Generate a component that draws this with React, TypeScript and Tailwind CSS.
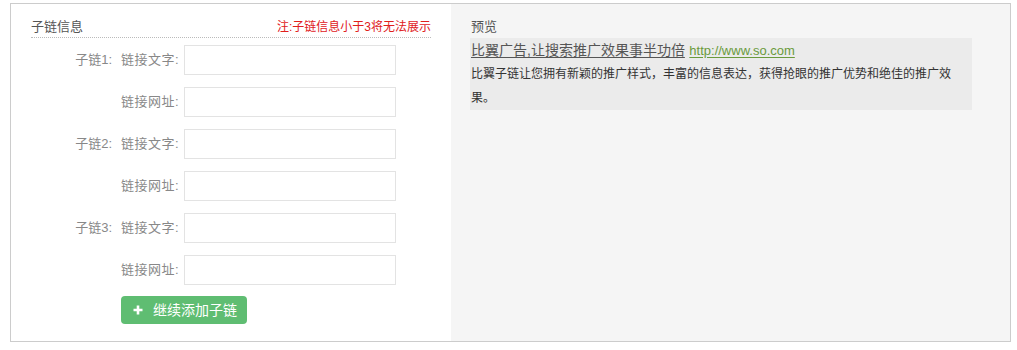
import React from 'react';

const font = "font-['Liberation_Sans','Noto_Sans_CJK_SC',sans-serif]";

const rows = [
  { label: '子链1:', kind: 'text' },
  { label: '', kind: 'url' },
  { label: '子链2:', kind: 'text' },
  { label: '', kind: 'url' },
  { label: '子链3:', kind: 'text' },
  { label: '', kind: 'url' },
];

export default function App() {
  return (
    <div className={`pl-[10px] pt-[3px] ${font}`}>
      <div className="w-[1001px] h-[339px] border border-[#cccccc] flex">
        {/* left: sub-link form */}
        <div className="w-[440px] bg-white pl-[20px] pt-[13px]">
          <div className="w-[400px] h-[21px] border-b border-dotted border-[#bbbbbb] flex items-start justify-between">
            <span className="text-[13px] leading-[20px] text-[#555555]">子链信息</span>
            <span className="text-[12px] leading-[20px] text-[#e0201c]">注:子链信息小于3将无法展示</span>
          </div>

          <div className="mt-[7px] flex flex-col gap-[12px]">
            {rows.map((r, i) => (
              <div key={i} className="flex items-center h-[30px]">
                <span className="w-[81px] text-right text-[13px] text-[#888888]">{r.label}</span>
                <span className="ml-[9px] w-[60px] text-left text-[13px] tracking-[0.5px] text-[#888888]">
                  {r.kind === 'text' ? '链接文字:' : '链接网址:'}
                </span>
                <input
                  type="text"
                  className="ml-[3px] w-[212px] h-[30px] border border-[#e3e3e3] bg-white outline-none"
                />
              </div>
            ))}
          </div>

          <button className="mt-[11px] ml-[90px] w-[126px] h-[28px] rounded-[4px] bg-[#5fbd72] text-white text-[14px] flex items-center pl-[12px] gap-[10px]">
            <svg width="10" height="10" viewBox="0 0 10 10">
              <path d="M5 0.5v9M0.5 5h9" stroke="white" strokeWidth="2.6" />
            </svg>
            <span>继续添加子链</span>
          </button>
        </div>

        {/* right: preview */}
        <div className="flex-1 bg-[#f5f5f5] pl-[19px] pt-[13px]">
          <div className="pl-[1px] h-[21px] text-[13px] leading-[20px] text-[#555555]">预览</div>
          <div className="w-[502px] h-[72px] bg-[#ebebeb] pl-[1px]">
            <div className="h-[24px] leading-[24px] whitespace-nowrap">
              <a className="text-[14px] text-[#555555] underline underline-offset-2">比翼广告,让搜索推广效果事半功倍</a>
              <span> </span>
              <a className="text-[13px] text-[#6a9a3c] underline underline-offset-2">http://www.so.com</a>
            </div>
            <p className="w-[490px] text-[12px] leading-[24px] text-[#333333]">
              比翼子链让您拥有新颖的推广样式，丰富的信息表达，获得抢眼的推广优势和绝佳的推广效果。
            </p>
          </div>
        </div>
      </div>
    </div>
  );
}
